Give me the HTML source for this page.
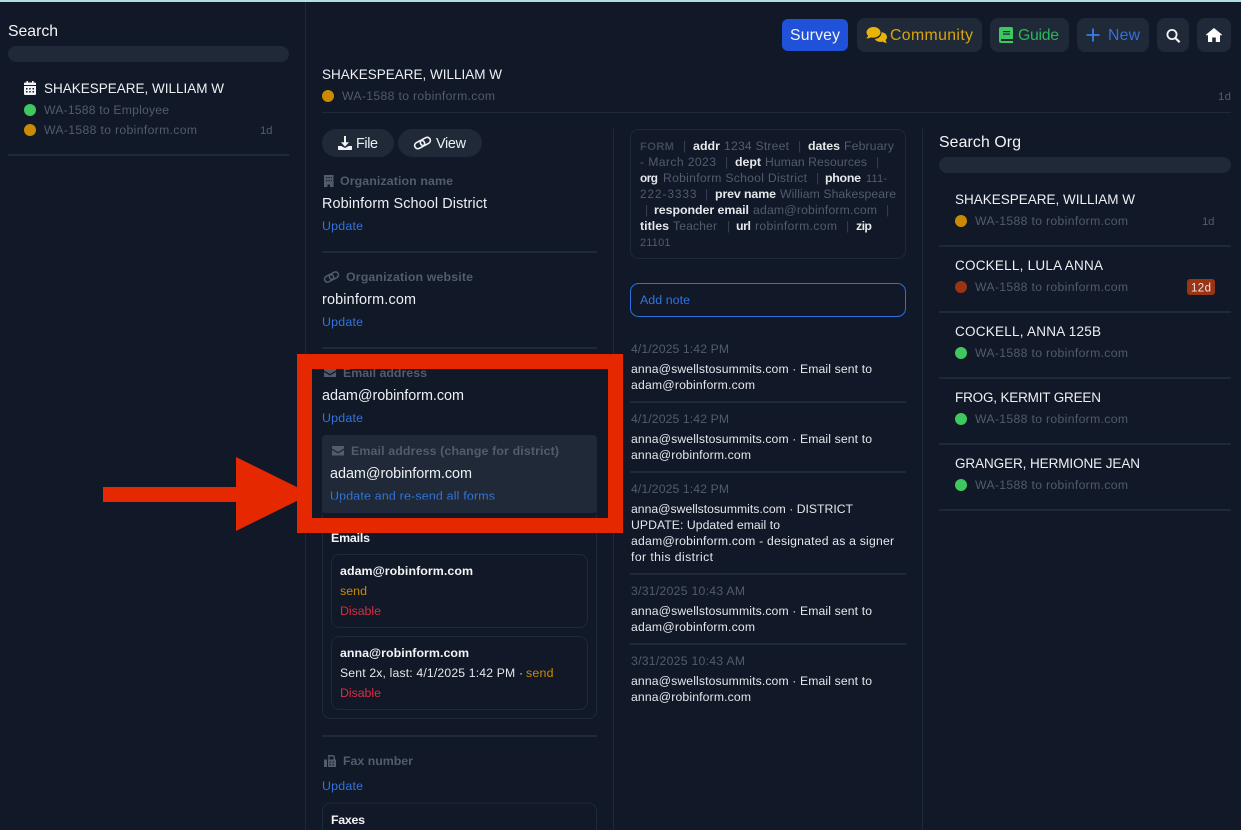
<!DOCTYPE html>
<html><head><meta charset="utf-8"><title>Robinform</title>
<style>
html,body{margin:0;padding:0;background:#111827;width:1241px;height:830px;overflow:hidden}
svg{display:block}
text{font-family:"Liberation Sans",sans-serif;white-space:pre}
.a{font-size:15.8px;fill:#f3f4f6}
.n{font-size:14.4px;fill:#eef0f3}
.c{font-size:13.5px;fill:#eef0f3}
.s{font-size:12.2px;fill:#525c6b}
.d{font-size:11.4px;fill:#525c6b}
.l{font-size:12.4px;fill:#525c6b;font-weight:700}
.u{font-size:12.4px;fill:#3274dc}
.t{font-size:12.2px;fill:#e5e7eb}
.b{font-size:12.4px;fill:#f3f4f6;font-weight:700}
.y{font-size:12.4px;fill:#ca8a04}
.r{font-size:12.4px;fill:#d92d3f}
.h{font-size:12.2px;fill:#525c6b}
.k{font-size:12.4px;fill:#e5e7eb;font-weight:700}
.p{font-size:12.4px;fill:#374151}
</style></head><body>
<svg width="1241" height="830" viewBox="0 0 1241 830" xmlns="http://www.w3.org/2000/svg">
<rect width="1241" height="830" fill="#111827"/>
<rect width="1241" height="2" fill="#b4dfe0"/>
<rect x="305" y="2" width="1" height="828" fill="#1f2937"/>
<rect x="613" y="129" width="1" height="701" fill="#1f2937"/>
<rect x="922" y="129" width="1" height="701" fill="#1f2937"/>

<!-- left sidebar -->
<text class="a" x="8" y="36" textLength="50">Search</text>
<rect x="8" y="46" width="281" height="16" rx="8" fill="#1f2937"/>
<path d="M24 86h12v8a1 1 0 0 1-1 1H25a1 1 0 0 1-1-1zM24 85v-1.500a1 1 0 0 1 1-1h1.500V81h1.500v1.500h4V81h1.500v1.500H35a1 1 0 0 1 1 1V85z" fill="#f3f4f6"/>
<path d="M26 88h1.500v1.500H26zM29.200 88h1.500v1.500h-1.500zM32.500 88H34v1.500h-1.500zM26 91h1.500v1.500H26zM29.200 91h1.500v1.500h-1.500zM32.500 91H34v1.500h-1.500z" fill="#111827"/>
<text class="c" x="44" y="93" textLength="180">SHAKESPEARE, WILLIAM W</text>
<circle cx="30" cy="110" r="6" fill="#3fc860"/>
<text class="s" x="44" y="114" textLength="125">WA-1588 to Employee</text>
<circle cx="30" cy="130" r="6" fill="#ca8a04"/>
<text class="s" x="44" y="134" textLength="153">WA-1588 to robinform.com</text>
<text class="d" x="260" y="134" textLength="12.500">1d</text>
<rect x="8" y="154" width="281" height="2" fill="#1f2937"/>

<!-- top buttons -->
<rect x="782" y="19" width="66" height="32" rx="6" fill="#1f52d8"/>
<text class="a" x="790" y="40" textLength="50">Survey</text>
<rect x="857" y="18" width="125" height="34" rx="8" fill="#1f2937"/>
<path d="M873.500 27c3.900 0 7 2.400 7 5.300s-3.100 5.300-7 5.300c-.9 0-1.700-.1-2.500-.4-1.200.9-3 1.300-5 1.200 1-.8 1.800-1.800 2.100-2.700-1.100-.9-1.600-2.100-1.600-3.400 0-2.900 3.100-5.300 7-5.300z" fill="#eab308"/>
<path d="M881.500 32.300c3 .2 5.500 2.200 5.500 4.700 0 1.200-.5 2.200-1.400 3 .2.900.8 1.900 1.400 2.700-1.700.1-3.300-.3-4.500-1.100-.7.2-1.400.3-2.100.3-2.400 0-4.600-1.100-5.600-2.900 4.400-.3 6.700-3.100 6.700-6.700z" fill="#eab308"/>
<text class="a" x="890" y="40" textLength="83" style="fill:#d8a50d">Community</text>
<rect x="990" y="18" width="79" height="34" rx="8" fill="#1f2937"/>
<path d="M1001 27h10a2 2 0 0 1 2 2v14h-12a2 2 0 0 1-2-2V29a2 2 0 0 1 2-2z" fill="#3ec862"/>
<path d="M1003 31h7v1.200h-7zM1003 33.500h7v1.200h-7zM1001 39h12v2h-12z" fill="#1f2937"/>
<text class="a" x="1018" y="40" textLength="41" style="fill:#27b85a">Guide</text>
<rect x="1077" y="18" width="72" height="34" rx="8" fill="#1f2937"/>
<path d="M1093 28.500v13M1086.500 35h13" stroke="#3b7de8" stroke-width="1.800"/>
<text class="a" x="1108" y="40" textLength="32" style="fill:#3571dc">New</text>
<rect x="1157" y="18" width="32" height="34" rx="8" fill="#1f2937"/>
<circle cx="1172" cy="34.500" r="4.600" fill="none" stroke="#f3f4f6" stroke-width="1.800"/>
<path d="M1175.300 38l4.300 4.200" stroke="#f3f4f6" stroke-width="2.200"/>
<rect x="1197" y="18" width="34" height="34" rx="8" fill="#1f2937"/>
<path d="M1214 28l8 6.600-.9 1.100-1.100-.9V42h-4.200v-4.500h-3.600V42H1208v-7.200l-1.100.9-.9-1.100z" fill="#fff"/>

<!-- header -->
<text class="c" x="322" y="79" textLength="180">SHAKESPEARE, WILLIAM W</text>
<circle cx="328" cy="96" r="6" fill="#ca8a04"/>
<text class="s" x="342" y="100" textLength="153">WA-1588 to robinform.com</text>
<text class="d" x="1218" y="100" textLength="13">1d</text>
<rect x="322" y="112" width="909" height="1" fill="#1f2937"/>

<!-- file/view -->
<rect x="322" y="129" width="72" height="28" rx="14" fill="#1f2937"/>
<path d="M344 136h2v6.300h3l-4 4.300-4-4.300h3zM338 146h3.200l3.800 2 3.800-2h3.200v3.200a.8.800 0 0 1-.8.800h-12.400a.8.800 0 0 1-.8-.8z" fill="#f3f4f6"/>
<text class="n" x="356" y="148" textLength="22">File</text>
<rect x="398" y="129" width="84" height="28" rx="14" fill="#1f2937"/>
<g fill="none" stroke="#f3f4f6" stroke-width="1.600" transform="rotate(-28 422.500 143)"><rect x="414" y="139.800" width="10.500" height="6.400" rx="3.200"/><rect x="420.500" y="139.800" width="10.500" height="6.400" rx="3.200"/></g>
<text class="n" x="436" y="148" textLength="30">View</text>

<!-- org name -->
<path d="M324 175h9.500v12h-3.500v-2.500h-2.500v2.500H324z" fill="#525c6b"/>
<path d="M326 177h1.300v1.300H326zM328.500 177h1.300v1.300h-1.300zM331 177h1v1.300h-1zM326 180h1.300v1.300H326zM328.500 180h1.300v1.300h-1.300zM331 180h1v1.300h-1z" fill="#111827"/>
<text class="l" x="340" y="185" textLength="113">Organization name</text>
<text class="n" x="322" y="208" textLength="165">Robinform School District</text>
<text class="u" x="322" y="230" textLength="41">Update</text>
<rect x="322" y="251" width="275" height="2" fill="#1f2937"/>

<!-- org website -->
<g fill="none" stroke="#525c6b" stroke-width="1.500" transform="rotate(-28 331.500 277)"><rect x="324" y="274" width="9.500" height="6" rx="3"/><rect x="329.500" y="274" width="9.500" height="6" rx="3"/></g>
<text class="l" x="346" y="281" textLength="127">Organization website</text>
<text class="n" x="322" y="304" textLength="94">robinform.com</text>
<text class="u" x="322" y="326" textLength="41">Update</text>
<rect x="322" y="347" width="275" height="2" fill="#1f2937"/>

<!-- email -->
<path d="M324 368h12v2.500l-6 3.500-6-3.500zM324 372l6 3.500 6-3.500v5h-12z" fill="#525c6b"/>
<text class="l" x="343" y="377" textLength="84">Email address</text>
<text class="n" x="322" y="400" textLength="142">adam@robinform.com</text>
<text class="u" x="322" y="422" textLength="41">Update</text>
<rect x="322" y="435" width="275" height="78" rx="4" fill="#1f2937"/>
<path d="M332 446h12v2.500l-6 3.500-6-3.500zM332 450l6 3.500 6-3.500v5.500h-12z" fill="#525c6b"/>
<text class="l" x="351" y="455" textLength="208">Email address (change for district)</text>
<text class="n" x="330" y="478" textLength="142">adam@robinform.com</text>
<text class="u" x="330" y="500" textLength="165">Update and re-send all forms</text>

<!-- emails box -->
<rect x="322.500" y="500" width="274" height="218.500" rx="8" fill="none" stroke="#1f2937"/>
<rect x="322" y="513" width="276" height="2" fill="#111827"/>
<text class="b" x="331" y="542" textLength="39">Emails</text>
<rect x="331.500" y="554.500" width="256" height="73" rx="8" fill="none" stroke="#1f2937"/>
<text class="b" x="340" y="575" textLength="133">adam@robinform.com</text>
<text class="y" x="340" y="595" textLength="27">send</text>
<text class="r" x="340" y="615" textLength="41">Disable</text>
<rect x="331.500" y="636.500" width="256" height="73" rx="8" fill="none" stroke="#1f2937"/>
<text class="b" x="340" y="657" textLength="129">anna@robinform.com</text>
<text class="t" x="340" y="677" textLength="183">Sent 2x, last: 4/1/2025 1:42 PM ·</text>
<text class="y" x="526" y="677" textLength="27.500">send</text>
<text class="r" x="340" y="697" textLength="41">Disable</text>
<rect x="322" y="735" width="275" height="2" fill="#1f2937"/>

<!-- fax -->
<path d="M328 755h5.500l1.500 1.500v3h1v7.500h-8v-7.500h.500zM324 759.500h3v7.500h-3z" fill="#525c6b"/>
<path d="M329.500 756.500h4v3h-4zM329.500 761.500h1.200v1.200h-1.200zM332.500 761.500h1.200v1.200h-1.200zM329.500 764h1.200v1.200h-1.200zM332.500 764h1.200v1.200h-1.200z" fill="#111827"/>
<text class="l" x="343" y="765" textLength="70">Fax number</text>
<text class="u" x="322" y="790" textLength="41">Update</text>
<path d="M322.500 830V811a8 8 0 0 1 8-8h258a8 8 0 0 1 8 8v19" fill="none" stroke="#1f2937"/>
<text class="b" x="331" y="824" textLength="34">Faxes</text>

<!-- red annotation -->
<path fill-rule="evenodd" d="M297 354h326v179H297zM312 369v149h296V369z" fill="#e52800"/>
<path d="M103 487h133v-30l75 37-75 37v-29H103z" fill="#e52800"/>

<!-- form box -->
<rect x="630.500" y="129.500" width="275" height="129" rx="8" fill="none" stroke="#1f2937"/>
<text class="l" x="640" y="150" textLength="34" style="fill:#3d4856;font-size:11.200px">FORM</text>
<text class="p" x="683" y="150">|</text>
<text class="k" x="693" y="150" textLength="27">addr</text>
<text class="h" x="724" y="150" textLength="65">1234 Street</text>
<text class="p" x="798" y="150">|</text>
<text class="k" x="808" y="150" textLength="32">dates</text>
<text class="h" x="844" y="150" textLength="50">February</text>
<text class="h" x="640" y="166" textLength="76">- March 2023</text>
<text class="p" x="725" y="166">|</text>
<text class="k" x="735" y="166" textLength="26">dept</text>
<text class="h" x="765" y="166" textLength="102">Human Resources</text>
<text class="p" x="876" y="166">|</text>
<text class="k" x="640" y="182" textLength="18" style="font-size:11.800px">org</text>
<text class="h" x="663" y="182" textLength="144">Robinform School District</text>
<text class="p" x="816" y="182">|</text>
<text class="k" x="825" y="182" textLength="36">phone</text>
<text class="h" x="866" y="182" textLength="21" style="font-size:10.800px">111-</text>
<text class="h" x="640" y="198" textLength="56.500" style="font-size:11.600px">222-3333</text>
<text class="p" x="705" y="198">|</text>
<text class="k" x="715" y="198" textLength="61">prev name</text>
<text class="h" x="780" y="198" textLength="116">William Shakespeare</text>
<text class="p" x="645" y="214">|</text>
<text class="k" x="654" y="214" textLength="95">responder email</text>
<text class="h" x="753" y="214" textLength="124">adam@robinform.com</text>
<text class="p" x="886" y="214">|</text>
<text class="k" x="640" y="230" textLength="29">titles</text>
<text class="h" x="673" y="230" textLength="44">Teacher</text>
<text class="p" x="727" y="230">|</text>
<text class="k" x="736" y="230" textLength="15">url</text>
<text class="h" x="755" y="230" textLength="82">robinform.com</text>
<text class="p" x="846" y="230">|</text>
<text class="k" x="856" y="230" textLength="16">zip</text>
<text class="h" x="640" y="246" textLength="30.500" style="font-size:11px">21101</text>

<!-- add note -->
<rect x="630.500" y="283.500" width="275" height="33" rx="8" fill="none" stroke="#2f6fdd"/>
<text class="u" x="640" y="304" textLength="50">Add note</text>

<!-- timeline -->
<text class="s" x="631" y="353" textLength="98">4/1/2025 1:42 PM</text>
<text class="t" x="631" y="373" textLength="241">anna@swellstosummits.com · Email sent to</text>
<text class="t" x="631" y="389" textLength="124">adam@robinform.com</text>
<rect x="630" y="401" width="276" height="2" fill="#1f2937"/>
<text class="s" x="631" y="423" textLength="98">4/1/2025 1:42 PM</text>
<text class="t" x="631" y="443" textLength="241">anna@swellstosummits.com · Email sent to</text>
<text class="t" x="631" y="459" textLength="120">anna@robinform.com</text>
<rect x="630" y="471" width="276" height="2" fill="#1f2937"/>
<text class="s" x="631" y="493" textLength="98">4/1/2025 1:42 PM</text>
<text class="t" x="631" y="513" textLength="222">anna@swellstosummits.com · DISTRICT</text>
<text class="t" x="631" y="529" textLength="149">UPDATE: Updated email to</text>
<text class="t" x="631" y="545" textLength="263">adam@robinform.com - designated as a signer</text>
<text class="t" x="631" y="561" textLength="82">for this district</text>
<rect x="630" y="573" width="276" height="2" fill="#1f2937"/>
<text class="s" x="631" y="595" textLength="114">3/31/2025 10:43 AM</text>
<text class="t" x="631" y="615" textLength="241">anna@swellstosummits.com · Email sent to</text>
<text class="t" x="631" y="631" textLength="124">adam@robinform.com</text>
<rect x="630" y="643" width="276" height="2" fill="#1f2937"/>
<text class="s" x="631" y="665" textLength="114">3/31/2025 10:43 AM</text>
<text class="t" x="631" y="685" textLength="241">anna@swellstosummits.com · Email sent to</text>
<text class="t" x="631" y="701" textLength="120">anna@robinform.com</text>

<!-- right column -->
<text class="a" x="939" y="147" textLength="82">Search Org</text>
<rect x="939" y="157" width="292" height="16" rx="8" fill="#1f2937"/>
<text class="c" x="955" y="204" textLength="180">SHAKESPEARE, WILLIAM W</text>
<circle cx="961" cy="221" r="6" fill="#ca8a04"/>
<text class="s" x="975" y="225" textLength="153">WA-1588 to robinform.com</text>
<text class="d" x="1202" y="225" textLength="12.500">1d</text>
<rect x="939" y="245" width="292" height="2" fill="#1f2937"/>
<text class="c" x="955" y="270" textLength="148">COCKELL, LULA ANNA</text>
<circle cx="961" cy="287" r="6" fill="#9a3412"/>
<text class="s" x="975" y="291" textLength="153">WA-1588 to robinform.com</text>
<rect x="1187" y="279" width="28" height="16" rx="3" fill="#9a3412"/>
<text class="t" x="1191" y="291.500" textLength="20" style="font-size:11.500px">12d</text>
<rect x="939" y="311" width="292" height="2" fill="#1f2937"/>
<text class="c" x="955" y="336" textLength="146">COCKELL, ANNA 125B</text>
<circle cx="961" cy="353" r="6" fill="#3fc860"/>
<text class="s" x="975" y="357" textLength="153">WA-1588 to robinform.com</text>
<rect x="939" y="377" width="292" height="2" fill="#1f2937"/>
<text class="c" x="955" y="402" textLength="146">FROG, KERMIT GREEN</text>
<circle cx="961" cy="419" r="6" fill="#3fc860"/>
<text class="s" x="975" y="423" textLength="153">WA-1588 to robinform.com</text>
<rect x="939" y="443" width="292" height="2" fill="#1f2937"/>
<text class="c" x="955" y="468" textLength="185">GRANGER, HERMIONE JEAN</text>
<circle cx="961" cy="485" r="6" fill="#3fc860"/>
<text class="s" x="975" y="489" textLength="153">WA-1588 to robinform.com</text>
<rect x="939" y="509" width="292" height="2" fill="#1f2937"/>
</svg>
</body></html>
